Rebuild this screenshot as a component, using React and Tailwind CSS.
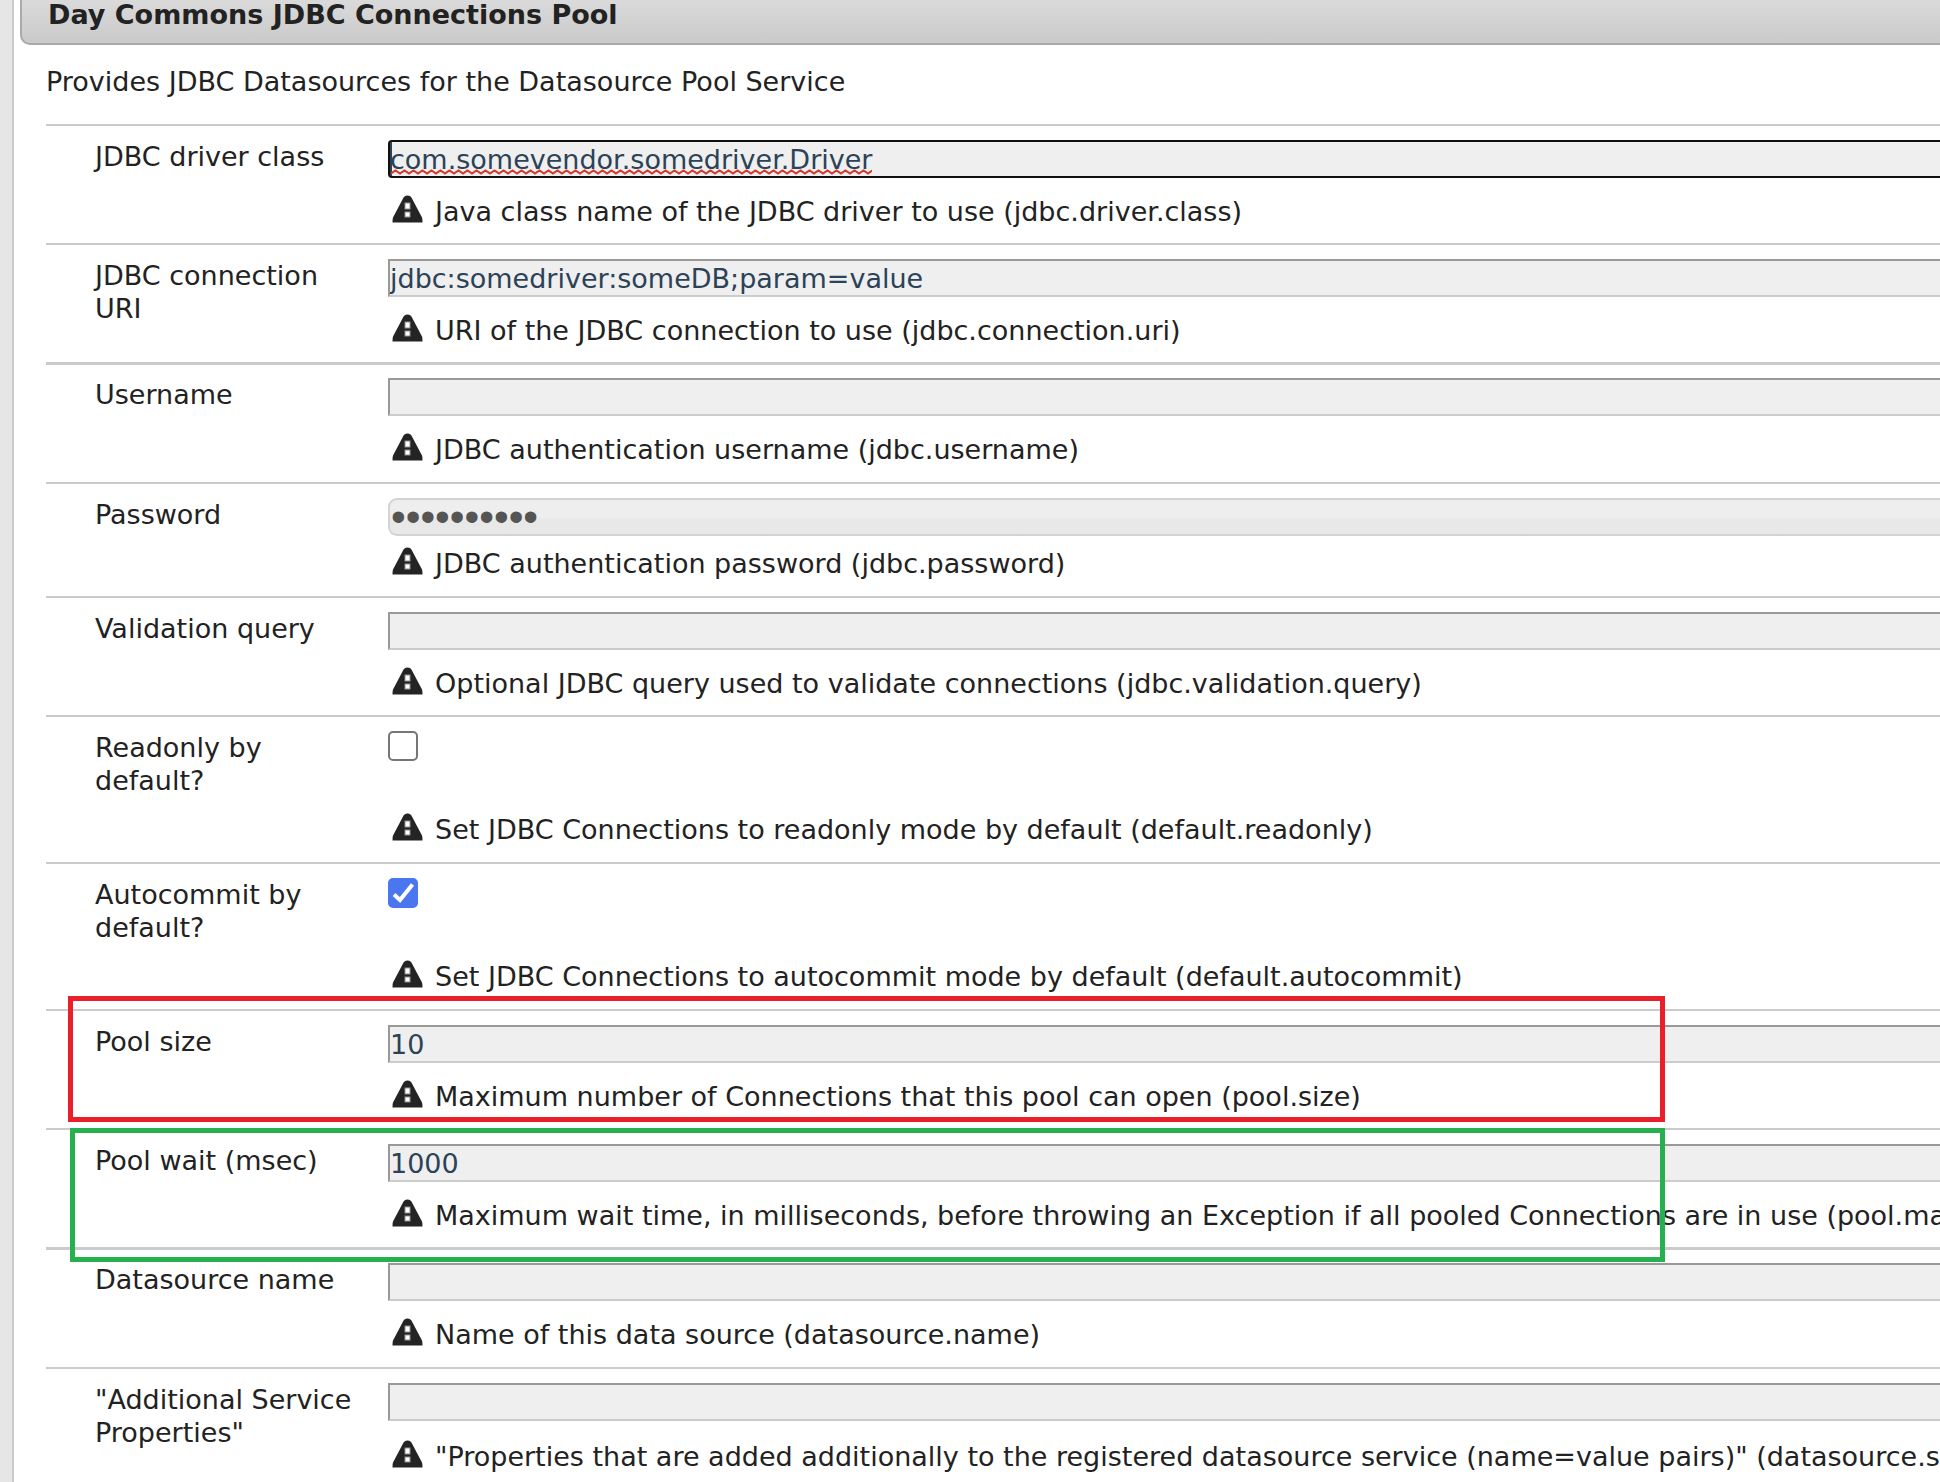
import React, { useState } from 'react';

const FIELDS = [
  { id: 'jdbc.driver.class', label: 'JDBC driver class', type: 'text', value: 'com.somevendor.somedriver.Driver', help: 'Java class name of the JDBC driver to use (jdbc.driver.class)', active: true },
  { id: 'jdbc.connection.uri', label: 'JDBC connection URI', type: 'text', value: 'jdbc:somedriver:someDB;param=value', help: 'URI of the JDBC connection to use (jdbc.connection.uri)' },
  { id: 'jdbc.username', label: 'Username', type: 'text', value: '', help: 'JDBC authentication username (jdbc.username)', thick: true },
  { id: 'jdbc.password', label: 'Password', type: 'password', value: 'unmodified', help: 'JDBC authentication password (jdbc.password)' },
  { id: 'jdbc.validation.query', label: 'Validation query', type: 'text', value: '', help: 'Optional JDBC query used to validate connections (jdbc.validation.query)' },
  { id: 'default.readonly', label: 'Readonly by default?', type: 'checkbox', value: false, help: 'Set JDBC Connections to readonly mode by default (default.readonly)' },
  { id: 'default.autocommit', label: 'Autocommit by default?', type: 'checkbox', value: true, help: 'Set JDBC Connections to autocommit mode by default (default.autocommit)' },
  { id: 'pool.size', label: 'Pool size', type: 'text', value: '10', help: 'Maximum number of Connections that this pool can open (pool.size)', mark: 'left-[22px] -top-[15px] h-[126px] border-[#e92029]' },
  { id: 'pool.max.wait.msec', label: 'Pool wait (msec)', type: 'text', value: '1000', help: 'Maximum wait time, in milliseconds, before throwing an Exception if all pooled Connections are in use (pool.max.wait.msec)', mark: 'left-[24px] -top-[2px] h-[134px] border-[#27b050]' },
  { id: 'datasource.name', label: 'Datasource name', type: 'text', value: '', help: 'Name of this data source (datasource.name)', thick: true },
  { id: 'datasource.svc.properties', label: '"Additional Service Properties"', type: 'text', value: '', help: '"Properties that are added additionally to the registered datasource service (name=value pairs)" (datasource.svc.properties)', gap: 'mt-[19px]' },
];

const GAPS = {
  text: 'mt-[17px] mb-[15px]',
  password: 'mt-[11px] mb-[16px]',
  checkbox: 'mt-[52px] mb-[16px]',
};

const INPUTS = {
  text: 'border-2 border-r-0 border-t-[#999999] border-l-[#999999] border-b-[#cccccc] bg-[#efefef] text-[27px] text-[#2c4257]',
  password: "border-2 border-r-0 border-[#d3d3d3] rounded-l-[9px] bg-linear-to-b from-[#eeeeee] from-50% to-[#e8e8e8] to-60% pl-px font-['Liberation_Sans',Arial,sans-serif] text-[42px] leading-[34px] text-[#555555]",
};

const WarningIcon = () => (
  <svg className="ml-1 h-7 w-[31px] shrink-0" viewBox="0 0 31 28" aria-hidden="true">
    <path d="M10.5 4.5Q12 0.5 15.5 0.5T20.5 4.5L30 22.5Q30.5 23.5 30.5 27.5H0.5Q0.5 23.5 1 22.5Z" fill="#242424" />
    <path d="M12.5 7.5h6v7h-6zM12.5 16.5h6v6h-6z" fill="#909090" />
    <path d="M13.5 8.5h4v5h-4zM13.5 17.5h4v4h-4z" fill="#ffffff" />
  </svg>
);

// caret and spelling underline of the focused box
const ActiveMarks = () => (
  <svg className="pointer-events-none absolute left-0 top-0 h-[38px] w-[484px]" aria-hidden="true">
    <defs>
      <pattern id="wave" x="3" y="29" width="9" height="6" patternUnits="userSpaceOnUse">
        <path d="M-4.5 1.5L0 4.5L4.5 1.5L9 4.5L13.5 1.5" fill="none" stroke="#d23a2e" strokeWidth="2" />
      </pattern>
    </defs>
    <rect x="2" y="2" width="2" height="34" fill="#2c4257" />
    <rect x="3" y="29" width="481" height="6" fill="url(#wave)" />
  </svg>
);

const Field = ({ field }) => {
  const [value, setValue] = useState(field.value);
  const helpId = `${field.id}-help`;

  return (
    <div className={`relative flex border-[#cbcbcb] pl-[49px] ${field.thick ? 'border-t-3 pt-[13px] pb-px' : 'border-t-2 pt-[14px]'}`}>
      <label htmlFor={field.id} className="mr-[33px] w-[260px] shrink-0">{field.label}</label>
      <div className="min-w-0 flex-1">
        {field.type === 'checkbox' ? (
          <div className="relative size-[30px]">
            <input
              id={field.id}
              type="checkbox"
              checked={value}
              onChange={(e) => setValue(e.target.checked)}
              aria-describedby={helpId}
              className="block size-[30px] appearance-none rounded-[5px] border-2 border-[#767676] bg-white checked:border-[#4a76f0] checked:bg-[#4a76f0]"
            />
            {value && (
              <svg className="pointer-events-none absolute left-0 top-0 size-[30px]" viewBox="0 0 30 30" aria-hidden="true">
                <path d="M6 16.5L12 22L24.5 6.5" fill="none" stroke="#ffffff" strokeWidth="4" />
              </svg>
            )}
          </div>
        ) : (
          <div className="relative">
            <input
              id={field.id}
              type={field.type}
              value={value}
              onChange={(e) => setValue(e.target.value)}
              aria-describedby={helpId}
              spellCheck={false}
              className={`block h-[38px] w-full outline-none ${field.active ? 'rounded-l-[4px] border-2 border-r-0 border-[#101010] bg-[#efefef] text-[27px] text-[#2c4257]' : INPUTS[field.type]}`}
            />
            {field.active && <ActiveMarks />}
          </div>
        )}
        <div className={`flex gap-3 ${field.gap ? `${field.gap} mb-[15px]` : GAPS[field.type]}`}>
          <WarningIcon />
          <p id={helpId} className="whitespace-nowrap">{field.help}</p>
        </div>
      </div>
      {field.mark && (
        <div className={`pointer-events-none absolute right-[275px] z-10 border-5 ${field.mark}`} />
      )}
    </div>
  );
};

const App = () => {
  return (
    <div className="flex min-h-screen overflow-x-hidden bg-[#e6e6e6] pl-3 font-['DejaVu_Sans',Verdana,sans-serif] text-[27px] leading-[33px] text-[#222222]">
      <main className="min-w-0 flex-1 border-l-2 border-[#cbcbcb] bg-white">
        <h1 className="ml-[6px] rounded-bl-[10px] border-b-2 border-l-2 border-[#a9a9a9] bg-linear-to-b from-[#dadada] to-[#cacaca] pb-[14px] pl-[26px] font-bold leading-[29px]">
          Day Commons JDBC Connections Pool
        </h1>
        <form className="pl-8" onSubmit={(e) => e.preventDefault()}>
          <p className="pb-[26px] pt-5">Provides JDBC Datasources for the Datasource Pool Service</p>
          {FIELDS.map((field) => (
            <Field key={field.id} field={field} />
          ))}
        </form>
      </main>
    </div>
  );
};

export default App;
